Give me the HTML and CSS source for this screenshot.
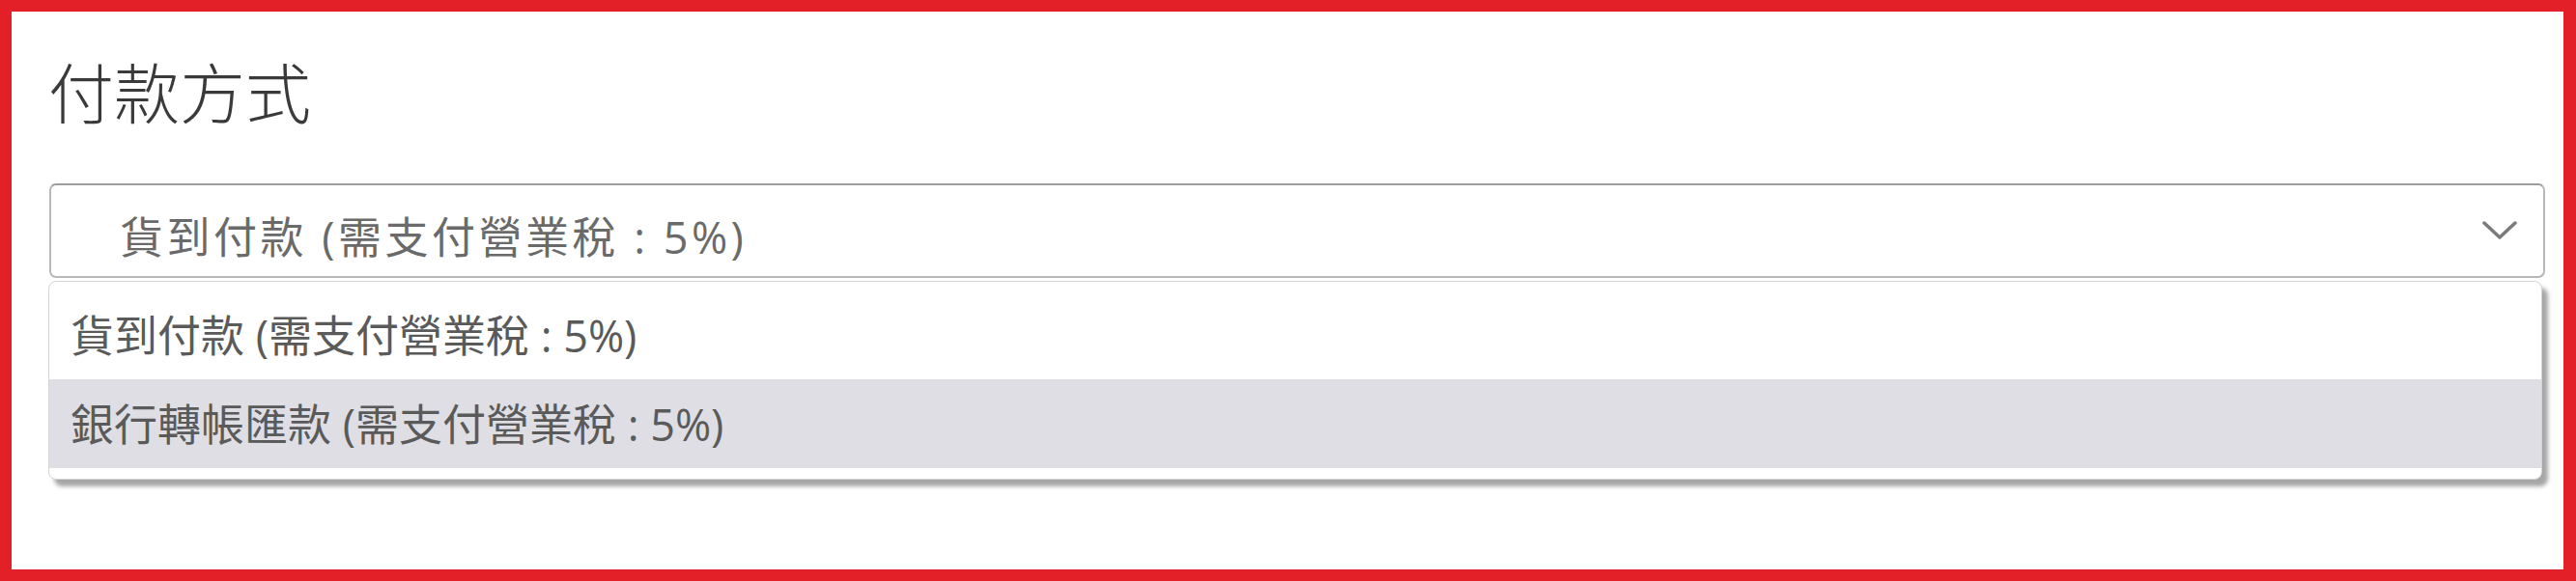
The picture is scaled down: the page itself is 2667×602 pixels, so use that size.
FILE: index.html
```html
<!DOCTYPE html>
<html lang="zh-Hant">
<head>
    <meta charset="UTF-8">
    <title>付款方式</title>
    <link rel="stylesheet" href="styles.css">
</head>
<body>

<div class="frame">
    <h2 class="title">付款方式</h2>

    <!-- select shown in its open state -->
    <div class="select-box">
        <span class="select-value">貨到付款 (需支付營業稅 : 5%)</span>
        <svg class="chevron" width="36" height="20" viewBox="0 0 36 20">
            <polyline points="2,2 18,17 34,2" fill="none" stroke="#7a7a7a" stroke-width="3.5" stroke-linecap="round" stroke-linejoin="round"/>
        </svg>
    </div>
    <ul class="option-list">
        <li class="option">貨到付款 (需支付營業稅 : 5%)</li>
        <li class="option active">銀行轉帳匯款 (需支付營業稅 : 5%)</li>
    </ul>
</div>

</body>
</html>
```

FILE: styles.css
```css
html, body {
    margin: 0;
    padding: 0;
    background: #fff;
}

body {
    font-family: "Open Sans", "Noto Sans CJK TC", sans-serif;
}

.frame {
    height: 602px;
    box-sizing: border-box;
    border: 12px solid #e32028;
    border-right-width: 13px;
    padding: 48px 19px 0 38px;
}

.title {
    margin: 0;
    font-family: "Noto Sans CJK TC", sans-serif;
    font-size: 68px;
    font-weight: 300;
    line-height: 1;
    color: #3a3a3a;
}

.select-box {
    margin: 62px 0 0 1px;
    height: 98px;
    box-sizing: border-box;
    border: 2px solid #b8b8b8;
    border-top-color: #9c9c9c;
    border-radius: 7px;
    padding: 12px 27px 0 71px;
    display: flex;
    align-items: center;
    justify-content: space-between;
}

.select-value {
    font-size: 45px;
    line-height: 1;
    letter-spacing: 3.5px;
    color: #6a6a6a;
}

.chevron {
    margin-top: -12px;
}

.option-list {
    list-style: none;
    margin: 3px 3px 0 0;
    padding: 9px 0 11px;
    border: 1px solid #d4d4d4;
    border-radius: 8px;
    background: #fff;
    box-shadow: 6px 7px 4px rgba(0, 0, 0, 0.35);
}

.option {
    height: 92px;
    display: flex;
    align-items: center;
    padding-left: 22px;
    font-size: 45px;
    line-height: 1;
    color: #5a5a5a;
}

.option.active {
    background: #dfdee4;
}
```
